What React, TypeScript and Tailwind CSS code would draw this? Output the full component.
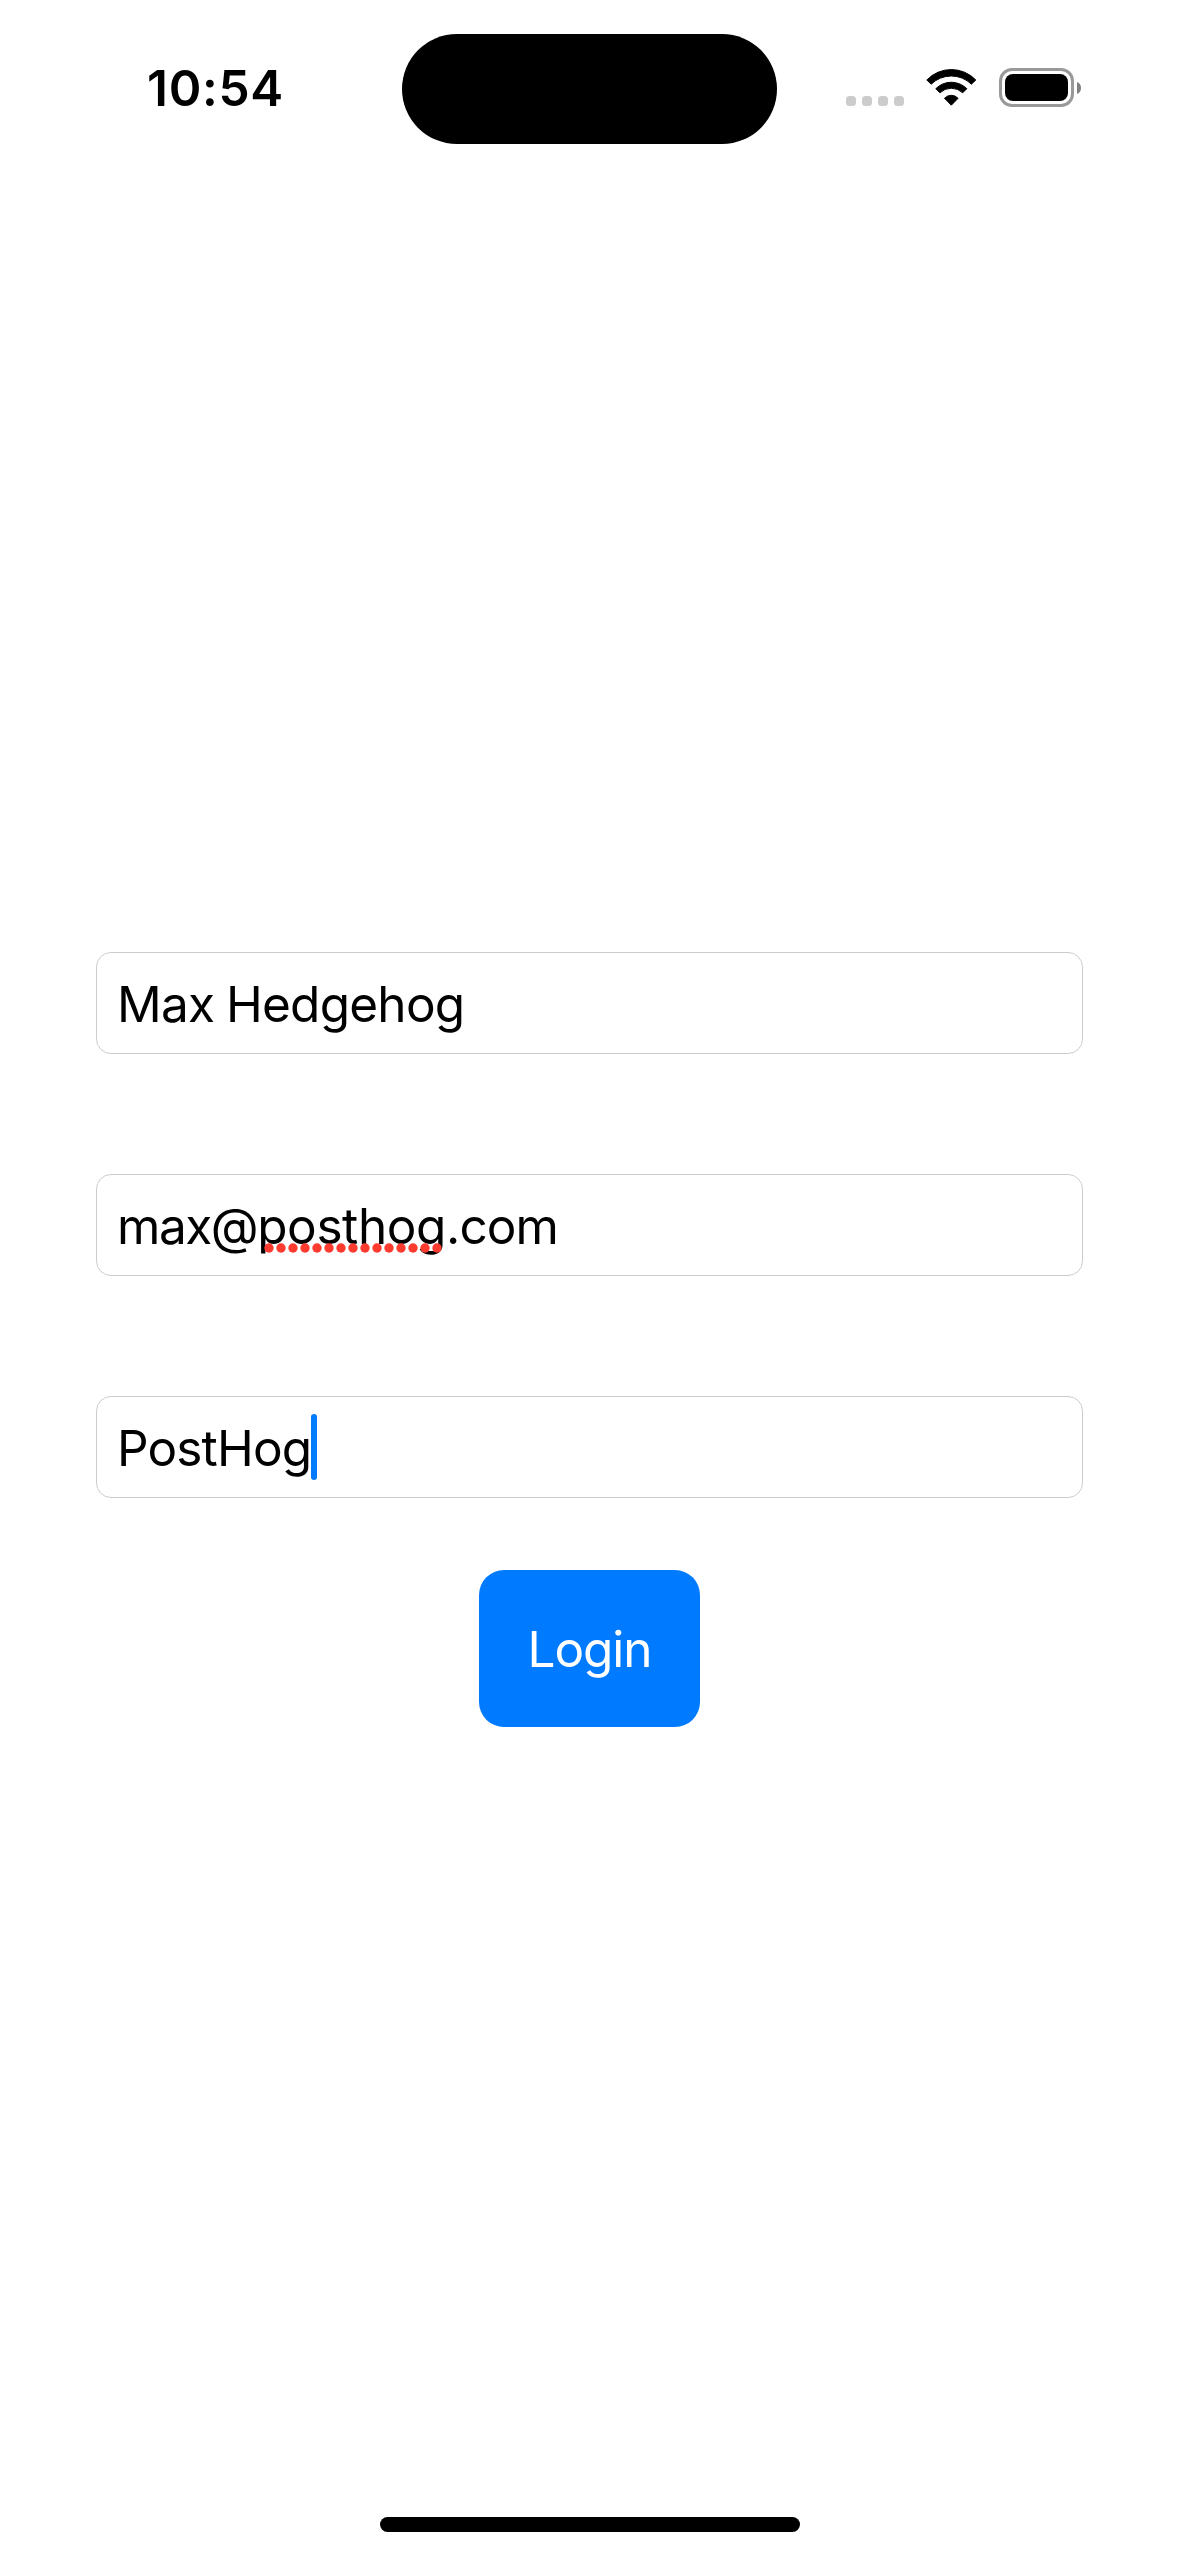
import type { ReactNode } from "react";

function StatusBar() {
  return (
    <header className="flex h-[144px] items-start pt-[34px]">
      <div className="flex h-[110px] w-[402px] items-center pl-[147px]">
        <time className="text-[49.5px] leading-none font-semibold tracking-[0.7px] whitespace-nowrap">10:54</time>
      </div>
      <div className="h-[110px] w-[375px] rounded-full bg-black" />
      <div className="flex h-[110px] items-start pt-[34px] pl-[69px]">
        <div className="mt-[28px] flex gap-[6px]">
          {[0, 1, 2, 3].map((i) => (
            <span key={i} className="size-[10px] rounded-[3.5px] bg-[#cccccc]" />
          ))}
        </div>
        <svg className="ml-[21px] h-[40px] w-[54px]" viewBox="0 0 54 40" fill="black" stroke="black" strokeWidth="1" strokeLinejoin="round">
          <path d="M1.8 12A33.9 33.9 0 0 1 50.8 12L46.4 16.2A28.7 28.7 0 0 0 6.2 16.2Z" />
          <path d="M10.8 20.7A21.8 21.8 0 0 1 41.8 20.7L37.7 24.8A16.5 16.5 0 0 0 14.9 24.8Z" />
          <path d="M19.5 30.3A9.2 9.2 0 0 1 33.1 30.3L26.3 37.2Z" />
        </svg>
        <div className="ml-[20px] flex items-center">
          <div className="h-[39px] w-[75px] rounded-[13px] border-3 border-[#999999] p-[3px]">
            <div className="h-full w-full rounded-[8px] bg-black" />
          </div>
          <svg className="ml-[3px] h-[12px] w-[4px]" viewBox="0 0 4 12">
            <path d="M0 0A6.5 6.5 0 0 1 0 12Z" fill="#808080" />
          </svg>
        </div>
      </div>
    </header>
  );
}

function Field({ children }: { children: ReactNode }) {
  return (
    <div className="flex h-[102px] items-center rounded-[15px] border border-[#cccccc] pl-[20px] text-[49.5px] leading-[60px] whitespace-nowrap">
      {children}
    </div>
  );
}

export default function App() {
  return (
    <div className="flex h-[2556px] w-[1179px] flex-col bg-white font-[Inter,sans-serif] text-black">
      <StatusBar />
      <main className="mt-[808px] flex flex-col items-center">
        <div className="flex w-[987px] flex-col gap-[120px]">
          <Field>
            <span className="relative top-px tracking-[-0.75px] [word-spacing:-1.5px]">Max Hedgehog</span>
          </Field>
          <Field>
            <span className="relative top-px tracking-[-1.45px]">max@</span>
            <span className="relative top-px tracking-[-0.4px]">
              posthog
              <svg className="absolute top-[47px] left-[6.6px] h-[10px] w-[180px]" viewBox="0 0 180 10" fill="#ff3b30">
                {Array.from({ length: 15 }, (_, i) => (
                  <circle key={i} cx={5 + i * 12} cy="5" r="4.7" />
                ))}
              </svg>
            </span>
            <span className="relative top-px tracking-[-0.9px]">.com</span>
          </Field>
          <Field>
            <span className="relative top-px w-[194px] tracking-[-0.85px]">PostHog</span>
            <span className="h-[66px] w-[6px] rounded-full bg-[#007aff]" />
          </Field>
        </div>
        <button className="mt-[72px] h-[157px] w-[221px] rounded-[25px] bg-[#007aff] text-[49.5px] leading-[60px] tracking-[-1.1px] text-white">
          Login
        </button>
      </main>
      <div className="mt-auto mb-[24px] h-[15px] w-[420px] self-center rounded-full bg-black" />
    </div>
  );
}
